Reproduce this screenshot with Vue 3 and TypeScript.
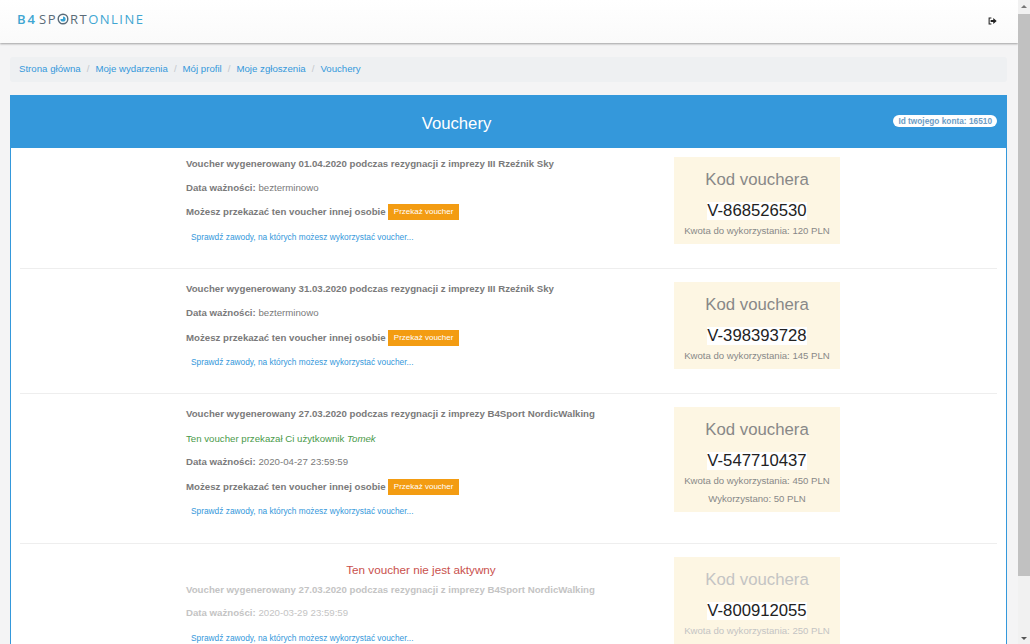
<script setup lang="ts">
interface Voucher {
  title: string;
  gift?: boolean;
  expiry: string;
  transfer: boolean;
  code: string;
  amount: number;
  used?: number;
  inactive?: boolean;
}
const crumbs: string[] = ['Strona główna', 'Moje wydarzenia', 'Mój profil', 'Moje zgłoszenia', 'Vouchery'];
const vouchers: Voucher[] = [
  { title: 'Voucher wygenerowany 01.04.2020 podczas rezygnacji z imprezy III Rzeźnik Sky', expiry: 'bezterminowo', transfer: true, code: 'V-868526530', amount: 120 },
  { title: 'Voucher wygenerowany 31.03.2020 podczas rezygnacji z imprezy III Rzeźnik Sky', expiry: 'bezterminowo', transfer: true, code: 'V-398393728', amount: 145 },
  { title: 'Voucher wygenerowany 27.03.2020 podczas rezygnacji z imprezy B4Sport NordicWalking', gift: true, expiry: '2020-04-27 23:59:59', transfer: true, code: 'V-547710437', amount: 450, used: 50 },
  { title: 'Voucher wygenerowany 27.03.2020 podczas rezygnacji z imprezy B4Sport NordicWalking', expiry: '2020-03-29 23:59:59', transfer: false, code: 'V-800912055', amount: 250, used: 50, inactive: true },
];
</script>

<template>
  <div class="screen">
    <div class="page">
      <header class="nav">
        <div class="logo">
          <span class="b4">B4</span><span class="sport">SP<svg class="o" viewBox="0 0 12 12" width="12" height="12"><circle cx="6" cy="6" r="4.8" fill="none" stroke="#5a6b78" stroke-width="1.4"/><path d="M6 3.4A2.6 2.6 0 1 1 3.4 6H6z" fill="#35a3d4"/></svg>RT</span><span class="online">ONLINE</span>
        </div>
        <svg class="logout" viewBox="0 0 12 10" width="9" height="8">
          <path d="M4.5 1H1.5v8h3" fill="none" stroke="#222" stroke-width="1.4"/>
          <path d="M3.5 3.6h3.5V1l4.6 4-4.6 4V6.4H3.5z" fill="#222"/>
        </svg>
      </header>
      <nav class="crumbs">
        <template v-for="(c, i) in crumbs" :key="c">
          <span v-if="i" class="sep">/</span>
          <a class="crumb">{{ c }}</a>
        </template>
      </nav>
      <section class="panel">
        <div class="head">
          <h1>Vouchery</h1>
          <span class="badge">Id twojego konta: 16510</span>
        </div>
        <div class="body">
          <article v-for="v in vouchers" :key="v.code" class="row" :class="{ inactive: v.inactive }">
            <div class="info">
              <p v-if="v.inactive" class="off">Ten voucher nie jest aktywny</p>
              <p class="line fade"><b>{{ v.title }}</b></p>
              <p v-if="v.gift" class="line gift">Ten voucher przekazał Ci użytkownik <i>Tomek</i></p>
              <p class="line fade"><b>Data ważności:</b> {{ v.expiry }}</p>
              <p v-if="v.transfer" class="line"><b>Możesz przekazać ten voucher innej osobie</b> <span class="btn">Przekaż voucher</span></p>
              <p class="link">Sprawdź zawody, na których możesz wykorzystać voucher...</p>
            </div>
            <div class="code">
              <div class="code-title">Kod vouchera</div>
              <div class="code-num"><span>{{ v.code }}</span></div>
              <div class="code-sub">Kwota do wykorzystania: {{ v.amount }} PLN</div>
              <div v-if="v.used" class="code-sub">Wykorzystano: {{ v.used }} PLN</div>
            </div>
          </article>
        </div>
      </section>
    </div>
    <aside class="scrollbar">
      <span class="arrow up"></span>
      <span class="thumb"></span>
      <span class="arrow down"></span>
    </aside>
  </div>
</template>

<style>
html, body { margin: 0; overflow: hidden; }
</style>

<style scoped>
.screen {
  display: flex;
  width: 1030px;
  height: 644px;
  overflow: hidden;
  font-family: "Liberation Sans", Arial, sans-serif;
  background: #f4f4f5;
}
.page { flex: 1; min-width: 0; overflow: hidden; }
.nav {
  height: 43px;
  box-shadow: 0 1px 2px rgba(0, 0, 0, .35);
  background: linear-gradient(#fff, #fafafa);
  display: flex;
  align-items: center;
  justify-content: space-between;
  padding: 0 21px 5px 17px;
  box-sizing: border-box;
}
.logo { font-size: 13px; line-height: 12px; letter-spacing: 1.5px; display: flex; align-items: center; font-family: "Open Sans", sans-serif; }
.b4, .online { color: #3fa6d2; }
.b4 { font-weight: 600; letter-spacing: 2px; margin-right: 2px; }
.sport { color: #5a6b78; display: inline-flex; align-items: center; }
.o { margin-right: 1px; }
.logout { display: block; margin-top: 4px; }
.crumbs {
  margin: 14px 11px 13px 10px;
  height: 25px;
  background: #eef0f2;
  border-radius: 3px;
  padding: 0 9px 2px;
  box-sizing: border-box;
  display: flex;
  align-items: center;
  font-size: 9.66px;
}
.crumb { color: #3498db; }
.sep { color: #c4c8cc; margin: 0 6px; }
.panel { margin: 0 11px 0 10px; }
.head {
  height: 53px;
  background: #3498db;
  display: flex;
  align-items: center;
  justify-content: center;
  position: relative;
  box-sizing: border-box;
  padding: 5px 104px 0 0;
}
h1 { margin: 0; color: #fff; font-weight: 400; font-size: 16.7px; }
.badge {
  position: absolute;
  right: 10px;
  top: 20px;
  background: #fff;
  color: #6d9dc5;
  font-size: 8.3px;
  font-weight: 700;
  line-height: 12px;
  padding: 0 5px;
  border-radius: 7px;
}
.body {
  background: #fff;
  border: 1px solid #3498db;
  border-top: 0;
  padding: 0 9px;
}
.row {
  display: flex;
  align-items: flex-start;
  border-bottom: 1px solid #eee;
  padding-left: 166px;
}
.row:first-child .info { padding-top: 4px; padding-bottom: 18.6px; }
.row:first-child .line { height: 24px; }
.row:first-child .link { margin-top: 1px; }
.row:first-child .code { margin-top: 9px; }
.info { width: 470px; margin-right: 18px; padding-top: 8px; padding-bottom: 19px; }
.line {
  margin: 0;
  height: 24.6px;
  line-height: 24px;
  font-size: 9.66px;
  color: #7a7a7a;
}
.gift { color: #4a9a4a; height: 23px; }
.gift ~ .link { margin-bottom: .6px; }
.off { margin: 17px 0 0; text-align: center; color: #c9504c; font-size: 11.7px; line-height: 17px; }
.row.inactive .info { padding-top: 0; }
.row.inactive .line { height: 23px; }
.row.inactive .link { margin-top: 2px; }
.row.inactive .fade { color: #c4c4c4; }
.row.inactive .code-title, .row.inactive .code-sub { color: #c4c4c4; }
.btn {
  display: inline-block;
  background: #f39c12;
  color: #fff;
  font-size: 8px;
  line-height: 16px;
  padding: 0 5.5px;
  vertical-align: middle;
  margin-top: -1px;
}
.link { margin: 0; padding-left: 5px; line-height: 24px; height: 24px; font-size: 8.34px; color: #3498db; }
.code {
  width: 166px;
  margin-top: 13px;
  background: #fdf6e3;
  text-align: center;
  padding: 11px 0 4px;
  box-sizing: border-box;
  flex: none;
}
.code-title { font-size: 16.8px; line-height: 24px; color: #888; }
.code-num { font-size: 16.7px; line-height: 22px; color: #222; margin-top: 8px; }
.code-num span { background: #fff; display: inline-block; line-height: 18px; vertical-align: top; margin-top: 2px; }
.code-sub { font-size: 9.6px; line-height: 18px; color: #888; }
.scrollbar {
  width: 12px;
  flex: none;
  background: #f1f1f1;
  display: flex;
  flex-direction: column;
  align-items: center;
}
.arrow { width: 0; height: 0; flex: none; border-left: 3px solid transparent; border-right: 3px solid transparent; }
.up { border-bottom: 3px solid #777; margin: 5px 0 6px; }
.down { border-top: 3px solid #555; margin: 6px 0 4px; }
.thumb { width: 12px; height: 562px; background: #c1c1c1; margin-bottom: auto; }
</style>
